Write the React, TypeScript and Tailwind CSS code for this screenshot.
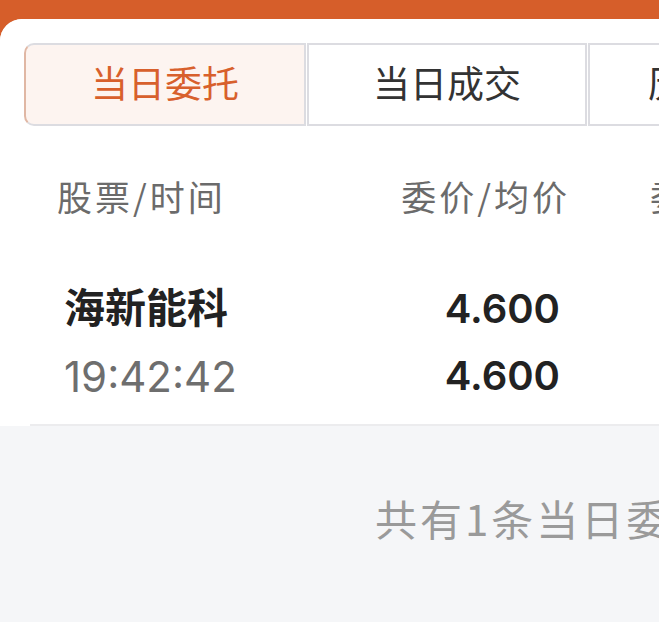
const font = { fontFamily: 'Inter, "Noto Sans CJK SC", sans-serif' };
const cjk = { fontFamily: '"Noto Sans CJK SC", sans-serif' };

const tabs = [
  { label: '当日委托', active: true, w: 'w-[282px]' },
  { label: '当日成交', active: false, w: 'w-[280px]' },
  { label: '历史委托', active: false, w: 'w-[268px]' },
];

export default function App() {
  return (
    <div
      className="w-[659px] h-[622px] overflow-hidden bg-[#d65e2a]"
      style={font}
    >
      <div className="mt-[19px] w-[1125px] h-[603px] rounded-tl-[22px] bg-[#f5f6f8] overflow-hidden">
        <div className="bg-white">
          {/* tabs */}
          <div className="flex pt-[24px] pl-[24px]">
            {tabs.map((t, i) => (
              <div
                key={t.label}
                className={`h-[83px] ${t.w} shrink-0 flex items-center justify-center text-[37px] border-2 ${
                  t.active
                    ? 'bg-[#fdf4f0] text-[#d8602c] border-[#dcdce1] border-l-[#e0b7a4] rounded-l-[10px]'
                    : 'bg-white text-[#333333] border-[#dcdce1]'
                } ${i > 0 ? 'ml-[1px]' : ''}`}
              >
                {t.label}
              </div>
            ))}
          </div>

          {/* header */}
          <div
            className="flex items-center h-[145px] pb-[4px] text-[35px] tracking-[3px] text-[#6b6b6b]"
            style={cjk}
          >
            <div className="w-[240px] pl-[57px] whitespace-nowrap">股票/时间</div>
            <div className="w-[330px] text-right whitespace-nowrap">委价/均价</div>
            <div className="pl-[80px] whitespace-nowrap">委托量</div>
          </div>

          {/* row */}
          <div className="ml-[30px] border-b-2 border-[#ececee] pb-[15px]">
            <div className="flex items-center h-[72px] pt-[3px]">
              <div className="w-[250px] pl-[34px] text-[41px] font-semibold text-[#222222] whitespace-nowrap">
                海新能科
              </div>
              <div className="w-[280px] text-right text-[40px] font-semibold text-[#222222]">4.600</div>
            </div>
            <div className="flex items-center h-[66px]">
              <div className="w-[250px] pl-[34px] text-[42px] text-[#6e6e6e] whitespace-nowrap">
                19:42:42
              </div>
              <div className="w-[280px] text-right text-[40px] font-semibold text-[#222222]">4.600</div>
            </div>
          </div>
        </div>

        {/* footer */}
        <div
          className="pt-[60px] pl-[375px] text-[42px] tracking-[3px] text-[#9a9a9a] whitespace-nowrap"
          style={cjk}
        >
          共有1条当日委托记录
        </div>
      </div>
    </div>
  );
}
